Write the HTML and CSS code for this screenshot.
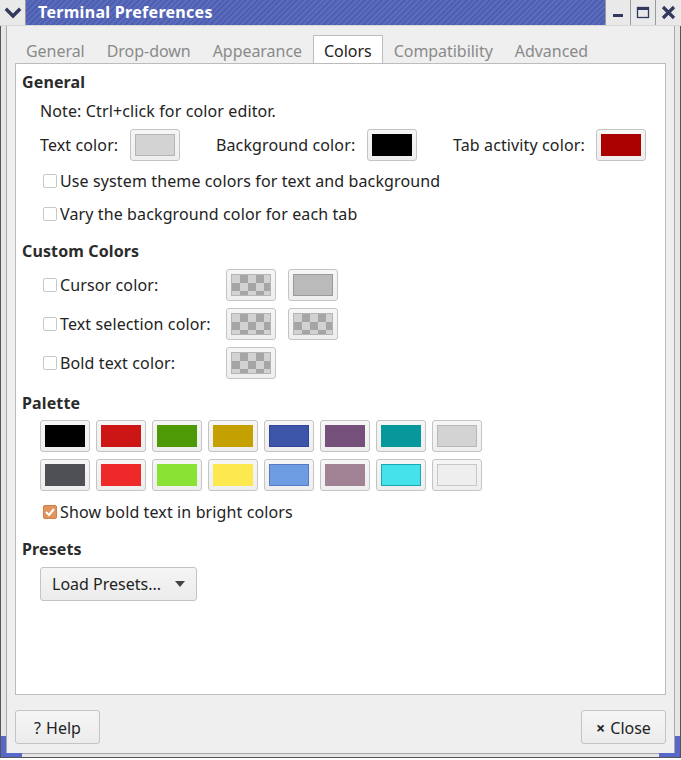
FILE: index.html
```html
<!DOCTYPE html>
<html>
<head>
<meta charset="utf-8">
<link rel="stylesheet" href="styles.css">
</head>
<body>
<div class="window">
  <div class="titlebar">
    <div class="tb-menu">
      <svg width="26" height="25" viewBox="0 0 26 25"><path d="M7 10 L13 16 L19 10" fill="none" stroke="#33395e" stroke-width="3.4" stroke-linecap="square"/></svg>
    </div>
    <div class="tb-title">Terminal Preferences</div>
    <div class="tb-btn">
      <svg width="24" height="25" viewBox="0 0 24 25"><rect x="7" y="14" width="10" height="3" fill="#33395e"/></svg>
    </div>
    <div class="tb-btn">
      <svg width="24" height="25" viewBox="0 0 24 25"><rect x="6.5" y="7.5" width="11" height="10" fill="none" stroke="#33395e" stroke-width="1.3"/><rect x="6" y="7" width="12" height="3" fill="#33395e"/></svg>
    </div>
    <div class="tb-btn tb-close">
      <svg width="25" height="25" viewBox="0 0 25 25"><path d="M7 7 L18 18 M18 7 L7 18" stroke="#33395e" stroke-width="3.2"/></svg>
    </div>
  </div>
  <div class="frame">
    <div class="client">
      <div class="tabs">
        <div class="tab">General</div>
        <div class="tab">Drop-down</div>
        <div class="tab">Appearance</div>
        <div class="tab active">Colors</div>
        <div class="tab">Compatibility</div>
        <div class="tab">Advanced</div>
      </div>
      <div class="panel">
        <div class="heading h-general">General</div>
        <div class="line note">Note: Ctrl+click for color editor.</div>
        <div class="color-row">
          <span class="lbl lbl-text">Text color:</span>
          <span class="cbtn"><span class="sw sw-text"></span></span>
          <span class="lbl lbl-bg">Background color:</span>
          <span class="cbtn"><span class="sw sw-black"></span></span>
          <span class="lbl lbl-tab">Tab activity color:</span>
          <span class="cbtn"><span class="sw sw-tab"></span></span>
        </div>
        <div class="check-row cb1"><span class="cb"></span>Use system theme colors for text and background</div>
        <div class="check-row cb2"><span class="cb"></span>Vary the background color for each tab</div>

        <div class="heading h-custom">Custom Colors</div>
        <div class="custom-row cr1">
          <span class="clabel"><span class="cb"></span>Cursor color:</span>
          <span class="cbtn"><span class="sw sw-check"></span></span>
          <span class="cbtn"><span class="sw sw-cursor"></span></span>
        </div>
        <div class="custom-row cr2">
          <span class="clabel"><span class="cb"></span>Text selection color:</span>
          <span class="cbtn"><span class="sw sw-check"></span></span>
          <span class="cbtn"><span class="sw sw-check"></span></span>
        </div>
        <div class="custom-row cr3">
          <span class="clabel"><span class="cb"></span>Bold text color:</span>
          <span class="cbtn"><span class="sw sw-check"></span></span>
        </div>

        <div class="heading h-palette">Palette</div>
        <div class="pal-row pr1">
          <span class="cbtn"><span class="sw p0"></span></span>
          <span class="cbtn"><span class="sw p1"></span></span>
          <span class="cbtn"><span class="sw p2"></span></span>
          <span class="cbtn"><span class="sw p3"></span></span>
          <span class="cbtn"><span class="sw p4"></span></span>
          <span class="cbtn"><span class="sw p5"></span></span>
          <span class="cbtn"><span class="sw p6"></span></span>
          <span class="cbtn"><span class="sw p7"></span></span>
        </div>
        <div class="pal-row pr2">
          <span class="cbtn"><span class="sw p8"></span></span>
          <span class="cbtn"><span class="sw p9"></span></span>
          <span class="cbtn"><span class="sw p10"></span></span>
          <span class="cbtn"><span class="sw p11"></span></span>
          <span class="cbtn"><span class="sw p12"></span></span>
          <span class="cbtn"><span class="sw p13"></span></span>
          <span class="cbtn"><span class="sw p14"></span></span>
          <span class="cbtn"><span class="sw p15"></span></span>
        </div>
        <div class="check-row cb3"><span class="cb checked"><svg width="14" height="14" viewBox="0 0 14 14"><path d="M3 7 L6 10 L11 4" fill="none" stroke="#fff" stroke-width="2"/></svg></span>Show bold text in bright colors</div>

        <div class="heading h-presets">Presets</div>
        <div class="presets-wrap">
          <button class="btn presets"><span>Load Presets...</span><svg width="12" height="8" viewBox="0 0 12 8"><path d="M1 1 L11 1 L6 7 Z" fill="#444"/></svg></button>
        </div>
      </div>
      <div class="footer">
        <button class="btn fbtn"><span class="ico">?</span>Help</button>
        <button class="btn fbtn"><span class="ico x">×</span>Close</button>
      </div>
    </div>
  </div>
  <div class="grip grip-l"></div>
  <div class="grip grip-r"></div>
</div>
</body>
</html>
```
FILE: styles.css
```css
html, body {
  margin: 0;
  padding: 0;
  background: #ffffff;
}
body {
  font-family: "Noto Sans", "Open Sans", sans-serif;
  font-size: 16px;
  color: #232323;
}
.window {
  position: relative;
  width: 681px;
  height: 758px;
  display: flex;
  flex-direction: column;
}
.titlebar {
  height: 26px;
  display: flex;
  background: repeating-linear-gradient(-45deg, #4f5fb0 0 2px, #5b6bbd 2px 4px);
  border-bottom: 1px solid #d8d8d8;
  box-sizing: border-box;
}
.tb-menu {
  width: 26px;
  height: 25px;
  background: #e9e9e9;
  border-right: 1px solid #9a9a9a;
  box-sizing: border-box;
}
.tb-title {
  flex: 1;
  color: #ffffff;
  font-weight: bold;
  font-size: 16px;
  line-height: 25px;
  padding-left: 12px;
  letter-spacing: 0.3px;
}
.tb-btn {
  width: 24px;
  height: 25px;
  background: #e9e9e9;
  border-left: 1px solid #9a9a9a;
}
.tb-close {
  width: 25px;
}
.tb-btn svg, .tb-menu svg {
  display: block;
}
.frame {
  flex: 1;
  display: flex;
  border: 1px solid #555;
  border-top: none;
  background: #e6e6e6;
  padding: 0 5px 3px 5px;
}
.client {
  flex: 1;
  display: flex;
  flex-direction: column;
  background: #efefef;
  border: 1px solid #a8a8a8;
  border-top: none;
  padding: 10px 8px 0 8px;
}
.tabs {
  display: flex;
  height: 27px;
  position: relative;
  z-index: 1;
}
.tab {
  padding: 2px 11px 0 11px;
  line-height: 26px;
  color: #8a8a8a;
  letter-spacing: -0.04px;
}
.tab.active {
  background: #ffffff;
  color: #222;
  border: 1px solid #bcbcbc;
  border-bottom: none;
  height: 28px;
  box-sizing: border-box;
  padding: 2px 10px 0 10px;
  margin-top: -1px;
  line-height: 27px;
}
.panel {
  height: 632px;
  box-sizing: border-box;
  background: #ffffff;
  border: 1px solid #bcbcbc;
  padding: 8px 6px 0 6px;
  display: flex;
  flex-direction: column;
  letter-spacing: 0.12px;
}
.heading {
  font-weight: bold;
  line-height: 20px;
  height: 20px;
  color: #2b2b2b;
}
.line, .check-row {
  line-height: 20px;
  height: 20px;
  margin-left: 18px;
}
.note { margin-top: 9px; }
.color-row {
  margin-top: 8px;
  margin-left: 18px;
  display: flex;
  align-items: center;
  height: 32px;
}
.lbl-text { width: 90px; }
.lbl-bg { width: 151px; margin-left: 36px; }
.lbl-tab { width: 143px; margin-left: 36px; }
.cbtn {
  width: 50px;
  height: 32px;
  box-sizing: border-box;
  border: 1px solid #c4c4c4;
  border-radius: 3px;
  background: linear-gradient(#f6f6f6, #eeeeee);
  display: flex;
  align-items: center;
  justify-content: center;
  flex: none;
}
.sw {
  width: 40px;
  height: 22px;
  box-sizing: border-box;
  display: block;
}
.sw-text { background: #d3d3d3; border: 1px solid #b5b5b5; }
.sw-black { background: #000; }
.sw-tab { background: #aa0000; }
.sw-cursor { background: #bababa; border: 1px solid #9a9a9a; }
.sw-check {
  border: 1px solid #b5b5b5;
  background: conic-gradient(#a5a5a5 0 25%, #d2d2d2 0 50%, #a5a5a5 0 75%, #d2d2d2 0) 0 0 / 16px 16px;
}
.check-row {
  display: flex;
  align-items: center;
}
.cb {
  width: 14px;
  height: 14px;
  box-sizing: border-box;
  border: 1px solid #c8c8c8;
  border-radius: 2px;
  background: #fff;
  margin-left: 3px;
  margin-right: 3px;
  flex: none;
  display: block;
}
.cb svg { display: block; margin: -1px; }
.cb.checked {
  background: #e0955c;
  border-color: #d08048;
}
.cb1 { margin-top: 10px; }
.cb2 { margin-top: 13px; }
.h-custom { margin-top: 17px; }
.custom-row {
  display: flex;
  align-items: center;
  height: 32px;
  margin-left: 18px;
  gap: 12px;
}
.clabel {
  width: 174px;
  display: flex;
  align-items: center;
}
.cr1 { margin-top: 8px; }
.cr2, .cr3 { margin-top: 7px; }
.h-palette { margin-top: 14px; }
.pal-row {
  display: flex;
  gap: 6px;
  margin-left: 18px;
  margin-top: 7px;
}
.p0 { background: #000000; }
.p1 { background: #cc1515; }
.p2 { background: #4e9a06; }
.p3 { background: #c4a000; }
.p4 { background: #3c55a8; border: 1px solid #34449a; }
.p5 { background: #75507b; }
.p6 { background: #06989a; }
.p7 { background: #d3d3d3; border: 1px solid #b8b8b8; }
.p8 { background: #4f5055; }
.p9 { background: #ef2929; }
.p10 { background: #8ae234; }
.p11 { background: #fce94f; }
.p12 { background: #6d9de0; border: 1px solid #5a78c8; }
.p13 { background: #a08294; }
.p14 { background: #46e2ec; border: 1px solid #1aa8b0; }
.p15 { background: #eeeeee; border: 1px solid #c8c8c8; }
.cb3 { margin-top: 11px; }
.h-presets { margin-top: 17px; }
.presets-wrap {
  margin-top: 8px;
  margin-left: 18px;
  display: flex;
}
.btn {
  font-family: "Noto Sans", "Open Sans", sans-serif;
  font-size: 16px;
  color: #232323;
  background: linear-gradient(#f5f5f5, #ececec);
  border: 1px solid #c4c4c4;
  border-radius: 3px;
  height: 34px;
  display: flex;
  align-items: center;
  box-sizing: border-box;
  padding: 0;
}
.presets {
  width: 157px;
  padding: 0 10px 0 11px;
  justify-content: space-between;
}
.footer {
  flex: 1;
  display: flex;
  justify-content: space-between;
  align-items: flex-start;
  padding-top: 15px;
}
.fbtn {
  width: 85px;
  justify-content: center;
  padding-top: 1px;
}
.ico {
  margin-right: 5px;
}
.ico.x {
  font-weight: bold;
  font-size: 16px;
}
.grip {
  position: absolute;
  bottom: 1px;
  width: 16px;
  height: 17px;
  border-bottom: 4px solid #5868c8;
}
.grip-l {
  left: 1px;
  border-left: 5px solid #5868c8;
}
.grip-r {
  right: 1px;
  border-right: 5px solid #5868c8;
}
```
